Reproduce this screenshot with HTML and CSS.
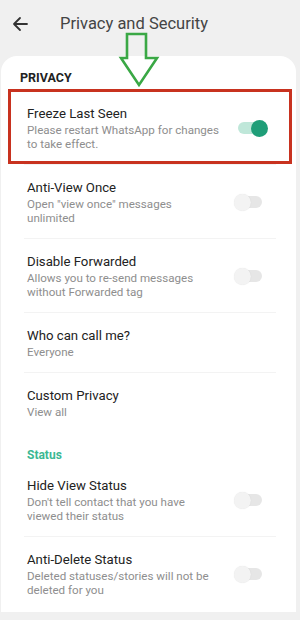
FILE: index.html
```html
<!DOCTYPE html>
<html>
<head>
<meta charset="utf-8">
<link rel="stylesheet" href="styles.css">
</head>
<body>
<div class="screen">
  <header class="appbar">
    <svg class="back" width="16" height="16" viewBox="0 0 16 16"><path d="M15 8H2M8 2L2 8l6 6" fill="none" stroke="#333" stroke-width="1.8" stroke-linecap="round" stroke-linejoin="round"/></svg>
    <h1 class="title">Privacy and Security</h1>
  </header>
  <main class="card">
    <div class="section-label">PRIVACY</div>
    <div class="row">
      <div class="text">
        <div class="row-title">Freeze Last Seen</div>
        <div class="row-sub">Please restart WhatsApp for changes<br>to take effect.</div>
      </div>
      <div class="switch on"><span class="track"></span><span class="thumb"></span></div>
    </div>
    <div class="row">
      <div class="text">
        <div class="row-title">Anti-View Once</div>
        <div class="row-sub">Open "view once" messages<br>unlimited</div>
      </div>
      <div class="switch"><span class="track"></span><span class="thumb"></span></div>
    </div>
    <div class="row">
      <div class="text">
        <div class="row-title">Disable Forwarded</div>
        <div class="row-sub">Allows you to re-send messages<br>without Forwarded tag</div>
      </div>
      <div class="switch"><span class="track"></span><span class="thumb"></span></div>
    </div>
    <div class="row">
      <div class="text">
        <div class="row-title">Who can call me?</div>
        <div class="row-sub">Everyone</div>
      </div>
    </div>
    <div class="row last">
      <div class="text">
        <div class="row-title">Custom Privacy</div>
        <div class="row-sub">View all</div>
      </div>
    </div>
    <div class="section-label green">Status</div>
    <div class="row">
      <div class="text">
        <div class="row-title">Hide View Status</div>
        <div class="row-sub">Don't tell contact that you have<br>viewed their status</div>
      </div>
      <div class="switch"><span class="track"></span><span class="thumb"></span></div>
    </div>
    <div class="row last">
      <div class="text">
        <div class="row-title">Anti-Delete Status</div>
        <div class="row-sub">Deleted statuses/stories will not be<br>deleted for you</div>
      </div>
      <div class="switch"><span class="track"></span><span class="thumb"></span></div>
    </div>
  </main>
  <div class="highlight"></div>
  <svg class="pointer" width="300" height="100" viewBox="0 0 300 100"><polygon points="127,34 146,34 146,58 157,58 139,85 121,58 127,58" fill="none" stroke="#3aa845" stroke-width="2.6" stroke-linejoin="miter"/></svg>
</div>
</body>
</html>
```

FILE: styles.css
```css
* { box-sizing: border-box; margin: 0; padding: 0; }
html, body { width: 300px; height: 620px; overflow: hidden; }
body {
  background: #f0f0f0;
  font-family: Roboto, "Noto Sans", sans-serif;
  color: #222;
}
.screen { position: relative; width: 300px; height: 620px; }
.appbar {
  height: 56px;
  display: flex;
  align-items: center;
  padding: 0 0 9px 12px;
}
.back { flex: none; }
.title {
  margin-left: 32px;
  font-size: 16.5px;
  font-weight: 400;
  color: #444;
}
.card {
  margin-left: 1px;
  width: 295px;
  height: 556px;
  background: #fff;
  border-radius: 16px 16px 0 0;
  padding: 14px 0 0 0;
}
.section-label {
  padding-left: 19px;
  font-size: 12.5px;
  line-height: 16px;
  font-weight: 700;
  color: #222;
  margin-bottom: 5px;
}
.section-label.green {
  color: #3cb893;
  font-size: 12px;
  margin: 15px 0 0 0;
  padding-left: 26px;
}
.row {
  display: flex;
  align-items: center;
  margin: 0 20px 0 23px;
  padding: 14px 0 13px 3px;
  border-bottom: 1px solid #f3f3f3;
}
.row.last { border-bottom: none; }
.text { flex: 1; min-width: 0; white-space: nowrap; }
.row-title {
  font-size: 13.2px;
  line-height: 17px;
  color: #222;
}
.row-sub {
  margin-top: 1px;
  font-size: 11.6px;
  line-height: 14px;
  color: #8e8e8e;
}
.switch {
  position: relative;
  width: 34px;
  height: 17px;
  margin-left: 8px;
  margin-right: 8px;
  flex: none;
}
.track {
  position: absolute;
  left: 4px;
  top: 2.5px;
  width: 24px;
  height: 12px;
  border-radius: 6px;
  background: #e6e6e6;
}
.thumb {
  position: absolute;
  left: 0;
  top: 0;
  width: 17px;
  height: 17px;
  border-radius: 50%;
  background: #f3f3f3;
  box-shadow: 0 0 1px rgba(0,0,0,0.12);
}
.switch.on .track { background: #bfe7d9; }
.switch.on .thumb { left: 17px; background: #1f9e78; box-shadow: none; }
.highlight {
  position: absolute;
  left: 8px;
  top: 89px;
  width: 284px;
  height: 75px;
  border: 3px solid #c8321f;
}
.pointer { position: absolute; left: 0; top: 0; }
```
